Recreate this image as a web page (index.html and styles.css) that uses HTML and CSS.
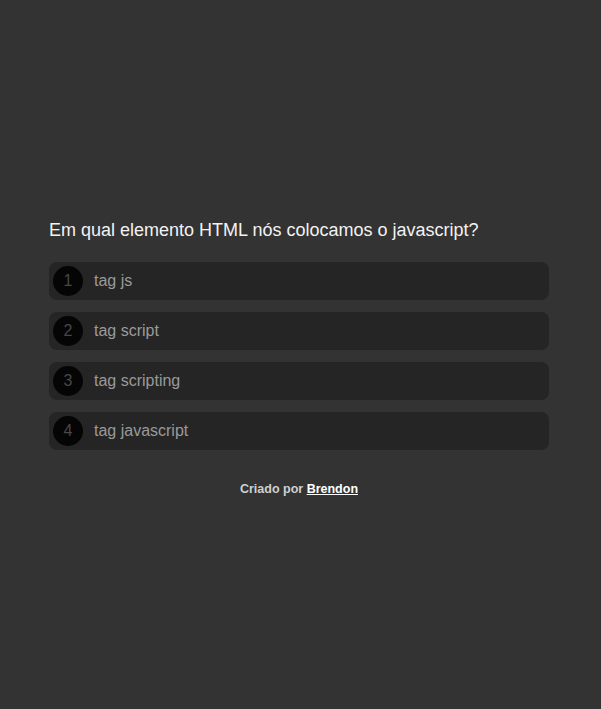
FILE: index.html
```html
<!DOCTYPE html>
<html lang="pt-BR">
<head>
<meta charset="utf-8">
<title>Quiz</title>
<link rel="stylesheet" href="styles.css">
</head>
<body>
<main class="page">
  <section class="quiz">
    <h1 class="question">Em qual elemento HTML nós colocamos o javascript?</h1>
    <ul class="options">
      <li class="option"><span class="num">1</span><span class="label">tag js</span></li>
      <li class="option"><span class="num">2</span><span class="label">tag script</span></li>
      <li class="option"><span class="num">3</span><span class="label">tag scripting</span></li>
      <li class="option"><span class="num">4</span><span class="label">tag javascript</span></li>
    </ul>
    <p class="credit">Criado por <a href="#">Brendon</a></p>
  </section>
</main>
</body>
</html>
```
FILE: styles.css
```css
* { box-sizing: border-box; }
html, body { margin: 0; padding: 0; }
body {
  background: #333333;
  font-family: "Liberation Sans", Arial, sans-serif;
  color: #f0f0f0;
}
.page {
  min-height: 100vh;
  display: flex;
  align-items: center;
  justify-content: center;
  padding: 5px 3px 0 0;
}
.quiz {
  width: 500px;
  display: flex;
  flex-direction: column;
}
.question {
  margin: 0 0 21px 0;
  font-size: 18px;
  font-weight: normal;
  line-height: 22px;
  color: #f2f2f2;
}
.options {
  list-style: none;
  margin: 0;
  padding: 0;
  display: flex;
  flex-direction: column;
  gap: 12px;
}
.option {
  height: 38px;
  background: #252525;
  border-radius: 8px;
  display: flex;
  align-items: center;
  padding: 0 4px;
}
.num {
  width: 30px;
  height: 30px;
  border-radius: 50%;
  background: #050505;
  color: #484848;
  font-size: 16px;
  display: flex;
  align-items: center;
  justify-content: center;
  margin-right: 11px;
}
.label {
  font-size: 16px;
  color: #9a9a9a;
}
.credit {
  margin: 32px 0 0 0;
  text-align: center;
  font-size: 12.5px;
  font-weight: bold;
  color: #cfcfcf;
}
.credit a {
  color: #ffffff;
  text-decoration: underline;
}
```
